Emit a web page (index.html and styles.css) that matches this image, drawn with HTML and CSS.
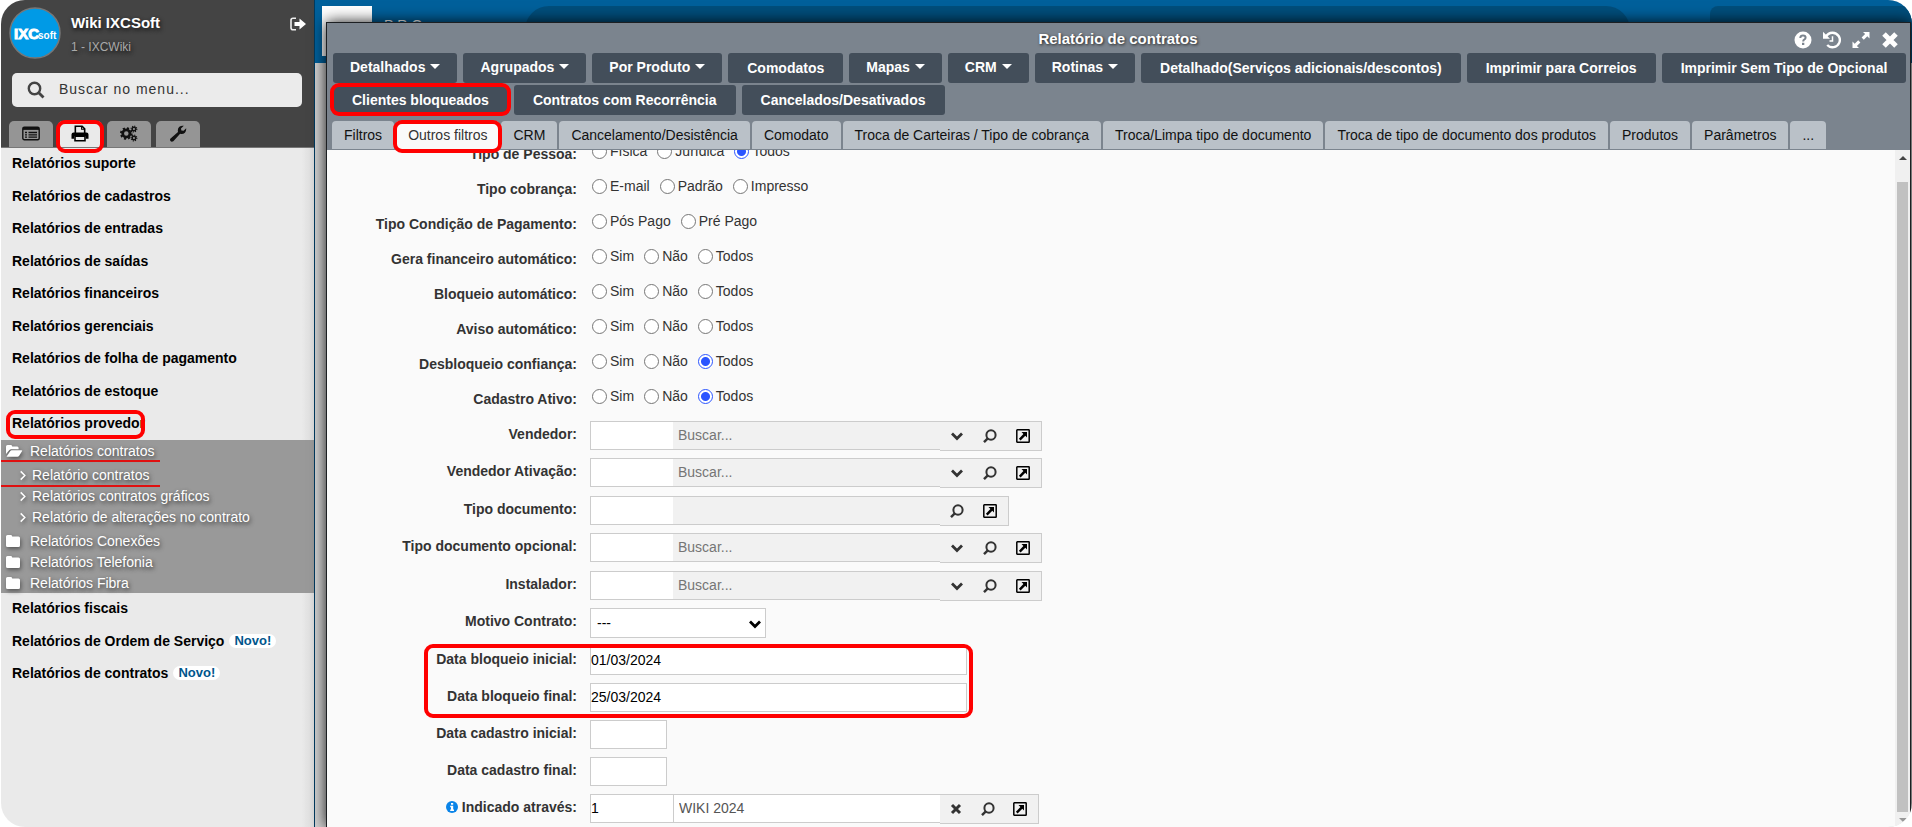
FILE: index.html
```
<!DOCTYPE html>
<html lang="pt-BR">
<head>
<meta charset="utf-8">
<title>Relatório de contratos</title>
<link rel="stylesheet" href="styles.css">
</head>
<body>
<svg class="defs" aria-hidden="true">
  <symbol id="i-chevron" viewBox="0 0 14 14"><path d="M2 4.500l5 5 5-5" fill="none" stroke="currentColor" stroke-width="2.800"/></symbol>
  <symbol id="i-lens" viewBox="0 0 14 14"><ellipse cx="8" cy="6" rx="4.600" ry="4.800" fill="none" stroke="currentColor" stroke-width="2"/><path d="M4.800 9.400L1 13.200" stroke="currentColor" stroke-width="2.400"/></symbol>
  <symbol id="i-open" viewBox="0 0 14 14"><rect x=".8" y=".8" width="12.400" height="12.400" rx=".5" fill="none" stroke="#000" stroke-width="1.500"/><path d="M5.500 3H11V8.500L9.300 6.800 4.600 11.500 2.900 9.800 7.400 5z" fill="#000"/></symbol>
  <symbol id="i-x" viewBox="0 0 14 14"><path d="M3 3l8 8M11 3l-8 8" stroke="currentColor" stroke-width="3"/></symbol>
  <symbol id="i-folder" viewBox="0 0 16 14"><path d="M1 2.500Q1 1 2.500 1H6q1.200 0 1.200 1.500h6.300Q15 2.500 15 4v7.500q0 1.500-1.500 1.500h-11Q1 13 1 11.500z" fill="currentColor"/></symbol>
  <symbol id="i-folder-open" viewBox="0 0 18 14"><path d="M1 10V2.500Q1 1 2.500 1H6q1.200 0 1.200 1.500h5Q13.600 2.500 13.600 4v1.200H6.300Q5 5.200 4.200 6.200z" fill="currentColor"/><path d="M1.500 12.800L5.300 7Q5.800 6.300 6.700 6.300H16.500q1.200 0 .500 1L14 12Q13.400 12.800 12.500 12.800z" fill="currentColor"/></symbol>
  <symbol id="i-angle" viewBox="0 0 8 12"><path d="M1.500 1.500L6 6l-4.500 4.500" fill="none" stroke="currentColor" stroke-width="1.600"/></symbol>
</svg>

<div class="app">
  <aside class="sidebar">
    <header class="side-head">
      <div class="user">
        <svg class="avatar" viewBox="0 0 52 52" role="img" aria-label="IXCsoft">
          <circle cx="26" cy="26" r="25" fill="#009ae6" stroke="#777" stroke-width="1.500"/>
          <text class="logo-big" x="5" y="32">IXC</text>
          <text class="logo-small" x="29" y="32">soft</text>
        </svg>
        <div class="who"><strong>Wiki IXCSoft</strong><span>1 - IXCWiki</span></div>
        <button class="bare logout" aria-label="Sair"><svg viewBox="0 0 16 14"><path d="M6 1.200H3Q1 1.200 1 3.200v7.600q0 2 2 2h3" fill="none" stroke="#eee" stroke-width="1.600"/><path d="M4.500 5h5V1.500L16 7 9.500 12.500V9h-5z" fill="#fff"/></svg></button>
      </div>
      <label class="search"><svg viewBox="0 0 18 18"><circle cx="7.500" cy="7.500" r="5.700" fill="none" stroke="#444" stroke-width="2.400"/><path d="M11.500 11.500L16.500 16.500" stroke="#444" stroke-width="2.800"/></svg><input type="text" aria-label="Buscar no menu" placeholder="Buscar no menu..."></label>
      <nav class="side-tabs">
        <button aria-label="Cadastros"><svg viewBox="0 0 18 16"><rect x=".8" y="1.800" width="16.400" height="12.400" rx="1.500" fill="none" stroke="#111" stroke-width="1.400"/><path d="M1 3.300h16M3 7h2M3 9.300h2M3 11.600h2M6.500 7H15M6.500 9.300H15M6.500 11.600H15" stroke="#111" stroke-width="1.300"/><path d="M1 3h16" stroke="#111" stroke-width="2.500"/></svg></button>
        <button class="on marked" aria-label="Relatórios"><svg viewBox="0 0 16 16"><path d="M3.600 8V1.200H10l2.400 2.400V8" fill="none" stroke="#000" stroke-width="1.500"/><path d="M9.500 1v3h3" fill="none" stroke="#000"/><path d="M0 13V9Q0 7 2 7H14q2 0 2 2v4h-2.500v-2.500h-11V13z" fill="#000"/><path d="M3.300 10.500h9.400v4.300H3.300z" fill="#eaeaea" stroke="#000" stroke-width="1.500"/></svg></button>
        <button aria-label="Configurações"><svg viewBox="0 0 20 18"><circle cx="7" cy="9" r="4" fill="none" stroke="#111" stroke-width="3"/><circle cx="7" cy="9" r="6" fill="none" stroke="#111" stroke-width="2" stroke-dasharray="2.400 2.310"/><circle cx="15.500" cy="4" r="2" fill="none" stroke="#111" stroke-width="1.600"/><circle cx="15.500" cy="4" r="3.200" fill="none" stroke="#111" stroke-width="1.200" stroke-dasharray="1.200 1.310"/><circle cx="15.500" cy="14" r="2" fill="none" stroke="#111" stroke-width="1.600"/><circle cx="15.500" cy="14" r="3.200" fill="none" stroke="#111" stroke-width="1.200" stroke-dasharray="1.200 1.310"/></svg></button>
        <button aria-label="Ferramentas"><svg viewBox="0 0 16 16"><path d="M1 12.700L8 6.500Q7.300 3.500 9.300 1.700 11 .3 13.500.7L10.800 3.200 11.200 5.200 13.300 5.500 15.700 3Q16 5.500 14.500 7.200 12.700 9 10 8.300L3.600 15.200Q2 16.200.900 15 0 13.800 1 12.700z" fill="#111"/></svg></button>
      </nav>
    </header>
    <ul class="menu">
      <li><a href="#">Relatórios suporte</a></li>
      <li><a href="#">Relatórios de cadastros</a></li>
      <li><a href="#">Relatórios de entradas</a></li>
      <li><a href="#">Relatórios de saídas</a></li>
      <li><a href="#">Relatórios financeiros</a></li>
      <li><a href="#">Relatórios gerenciais</a></li>
      <li><a href="#">Relatórios de folha de pagamento</a></li>
      <li><a href="#">Relatórios de estoque</a></li>
      <li class="marked-item"><a href="#">Relatórios provedor</a></li>
    </ul>
    <div class="submenu">
      <a href="#" class="underlined"><svg class="open"><use href="#i-folder-open"/></svg>Relatórios contratos</a>
      <div class="leafs">
        <a href="#" class="underlined"><svg><use href="#i-angle"/></svg>Relatório contratos</a>
        <a href="#"><svg><use href="#i-angle"/></svg>Relatórios contratos gráficos</a>
        <a href="#"><svg><use href="#i-angle"/></svg>Relatório de alterações no contrato</a>
      </div>
      <a href="#"><svg><use href="#i-folder"/></svg>Relatórios Conexões</a>
      <a href="#"><svg><use href="#i-folder"/></svg>Relatórios Telefonia</a>
      <a href="#"><svg><use href="#i-folder"/></svg>Relatórios Fibra</a>
    </div>
    <ul class="menu">
      <li><a href="#">Relatórios fiscais</a></li>
      <li><a href="#">Relatórios de Ordem de Serviço</a><span class="new">Novo!</span></li>
      <li><a href="#">Relatórios de contratos</a><span class="new">Novo!</span></li>
    </ul>
  </aside>

  <main class="stage">
    <div class="topbar">
      <div class="brand-box"></div>
      <span class="brand">PRO</span>
      <div class="top-pill"></div>
      <div class="top-box"></div>
    </div>

    <section class="window">
      <header class="win-head">
        <div class="title-row">
          <h1>Relatório de contratos</h1>
          <div class="win-tools">
            <button class="bare" aria-label="Ajuda"><svg viewBox="0 0 18 18"><circle cx="9" cy="9" r="8.500" fill="#fff"/><path d="M6.300 7Q6.500 4.600 9 4.600 11.600 4.600 11.600 6.800 11.600 8 10.200 8.700 9.200 9.200 9.200 10.500" fill="none" stroke="#7b848e" stroke-width="2"/><path d="M8 11.800h2.300v2.200H8z" fill="#7b848e"/></svg></button>
            <button class="bare" aria-label="Histórico"><svg viewBox="0 0 18 18"><path d="M2.800 6Q5 1.700 9.500 1.700A7.300 7.300 0 1 1 4.200 14" fill="none" stroke="#fff" stroke-width="2.400"/><path d="M0 .8V7.800H7z" fill="#fff"/><path d="M9.500 5.200V10H6.500" fill="none" stroke="#fff" stroke-width="1.500"/></svg></button>
            <button class="bare" aria-label="Maximizar"><svg viewBox="0 0 18 18"><path d="M11 1h6.500v6.500L15.300 5.300 11.800 8.800 9.600 6.600 13.100 3.100zM7 17H.500v-6.500L2.700 12.700 6.200 9.200 8.400 11.400 4.900 14.900z" fill="#fff"/></svg></button>
            <button class="bare" aria-label="Fechar"><svg viewBox="0 0 18 18"><path d="M3 3l12 12M15 3L3 15" stroke="#fff" stroke-width="5"/></svg></button>
          </div>
        </div>
        <div class="actions">
          <button class="drop">Detalhados</button>
          <button class="drop">Agrupados</button>
          <button class="drop">Por Produto</button>
          <button>Comodatos</button>
          <button class="drop">Mapas</button>
          <button class="drop">CRM</button>
          <button class="drop">Rotinas</button>
          <button>Detalhado(Serviços adicionais/descontos)</button>
          <button>Imprimir para Correios</button>
          <button>Imprimir Sem Tipo de Opcional</button>
          <button class="marked">Clientes bloqueados</button>
          <button>Contratos com Recorrência</button>
          <button>Cancelados/Desativados</button>
        </div>
        <nav class="tabs">
          <button>Filtros</button>
          <button class="on marked">Outros filtros</button>
          <button>CRM</button>
          <button>Cancelamento/Desistência</button>
          <button>Comodato</button>
          <button>Troca de Carteiras / Tipo de cobrança</button>
          <button>Troca/Limpa tipo de documento</button>
          <button>Troca de tipo de documento dos produtos</button>
          <button>Produtos</button>
          <button>Parâmetros</button>
          <button>...</button>
        </nav>
      </header>

      <div class="win-body">
        <form class="form">
          <div class="radios">
            <fieldset><legend>Tipo de Pessoa:</legend><label><input type="radio" name="pessoa">Física</label><label><input type="radio" name="pessoa">Jurídica</label><label><input type="radio" name="pessoa" checked>Todos</label></fieldset>
            <fieldset><legend>Tipo cobrança:</legend><label><input type="radio" name="cob">E-mail</label><label><input type="radio" name="cob">Padrão</label><label><input type="radio" name="cob">Impresso</label></fieldset>
            <fieldset><legend>Tipo Condição de Pagamento:</legend><label><input type="radio" name="pag">Pós Pago</label><label><input type="radio" name="pag">Pré Pago</label></fieldset>
            <fieldset><legend>Gera financeiro automático:</legend><label><input type="radio" name="fin">Sim</label><label><input type="radio" name="fin">Não</label><label><input type="radio" name="fin">Todos</label></fieldset>
            <fieldset><legend>Bloqueio automático:</legend><label><input type="radio" name="blo">Sim</label><label><input type="radio" name="blo">Não</label><label><input type="radio" name="blo">Todos</label></fieldset>
            <fieldset><legend>Aviso automático:</legend><label><input type="radio" name="avi">Sim</label><label><input type="radio" name="avi">Não</label><label><input type="radio" name="avi">Todos</label></fieldset>
            <fieldset><legend>Desbloqueio confiança:</legend><label><input type="radio" name="des">Sim</label><label><input type="radio" name="des">Não</label><label><input type="radio" name="des" checked>Todos</label></fieldset>
            <fieldset><legend>Cadastro Ativo:</legend><label><input type="radio" name="cad">Sim</label><label><input type="radio" name="cad">Não</label><label><input type="radio" name="cad" checked>Todos</label></fieldset>
          </div>
          <div class="fields">
            <div class="row"><label for="f1">Vendedor:</label><div class="lookup"><input id="f1" class="code" type="text"><input class="find" type="text" placeholder="Buscar..." aria-label="Buscar vendedor"><span class="tools"><button type="button" aria-label="Abrir lista"><svg><use href="#i-chevron"/></svg></button><button type="button" aria-label="Pesquisar"><svg><use href="#i-lens"/></svg></button><button type="button" aria-label="Abrir cadastro"><svg><use href="#i-open"/></svg></button></span></div></div>
            <div class="row"><label for="f2">Vendedor Ativação:</label><div class="lookup"><input id="f2" class="code" type="text"><input class="find" type="text" placeholder="Buscar..." aria-label="Buscar vendedor ativação"><span class="tools"><button type="button" aria-label="Abrir lista"><svg><use href="#i-chevron"/></svg></button><button type="button" aria-label="Pesquisar"><svg><use href="#i-lens"/></svg></button><button type="button" aria-label="Abrir cadastro"><svg><use href="#i-open"/></svg></button></span></div></div>
            <div class="row"><label for="f3">Tipo documento:</label><div class="lookup"><input id="f3" class="code" type="text"><input class="find" type="text" aria-label="Buscar tipo documento"><span class="tools"><button type="button" aria-label="Pesquisar"><svg><use href="#i-lens"/></svg></button><button type="button" aria-label="Abrir cadastro"><svg><use href="#i-open"/></svg></button></span></div></div>
            <div class="row"><label for="f4">Tipo documento opcional:</label><div class="lookup"><input id="f4" class="code" type="text"><input class="find" type="text" placeholder="Buscar..." aria-label="Buscar tipo documento opcional"><span class="tools"><button type="button" aria-label="Abrir lista"><svg><use href="#i-chevron"/></svg></button><button type="button" aria-label="Pesquisar"><svg><use href="#i-lens"/></svg></button><button type="button" aria-label="Abrir cadastro"><svg><use href="#i-open"/></svg></button></span></div></div>
            <div class="row"><label for="f5">Instalador:</label><div class="lookup"><input id="f5" class="code" type="text"><input class="find" type="text" placeholder="Buscar..." aria-label="Buscar instalador"><span class="tools"><button type="button" aria-label="Abrir lista"><svg><use href="#i-chevron"/></svg></button><button type="button" aria-label="Pesquisar"><svg><use href="#i-lens"/></svg></button><button type="button" aria-label="Abrir cadastro"><svg><use href="#i-open"/></svg></button></span></div></div>
            <div class="row"><label for="f6">Motivo Contrato:</label><span class="select"><select id="f6"><option>---</option></select><svg><use href="#i-chevron"/></svg></span></div>
            <div class="row outlined"><label for="f7">Data bloqueio inicial:</label><input id="f7" class="date wide" type="text" value="01/03/2024"></div>
            <div class="row"><label for="f8">Data bloqueio final:</label><input id="f8" class="date wide" type="text" value="25/03/2024"></div>
            <div class="row"><label for="f9">Data cadastro inicial:</label><input id="f9" class="date" type="text"></div>
            <div class="row"><label for="f10">Data cadastro final:</label><input id="f10" class="date" type="text"></div>
            <div class="row"><label for="f11"><svg class="info" viewBox="0 0 12 12"><circle cx="6" cy="6" r="6" fill="#0a84e8"/><path d="M5 2h2.200v1.800H5zM4.200 4.800h3V8.500H8V10H4.200V8.500H5V6.200h-.8z" fill="#fff"/></svg>Indicado através:</label><div class="lookup filled"><input id="f11" class="code" type="text" value="1"><input class="find" type="text" value="WIKI 2024" aria-label="Indicado através, nome"><span class="tools"><button type="button" aria-label="Limpar"><svg><use href="#i-x"/></svg></button><button type="button" aria-label="Pesquisar"><svg><use href="#i-lens"/></svg></button><button type="button" aria-label="Abrir cadastro"><svg><use href="#i-open"/></svg></button></span></div></div>
          </div>
        </form>
        <div class="scroll" aria-hidden="true"><i class="up"></i><i class="thumb"></i><i class="down"></i></div>
      </div>
    </section>
  </main>
</div>
</body>
</html>
```
FILE: styles.css
```
*, *::before, *::after { box-sizing: border-box; }
html, body { height: 100%; }
body {
  margin: 0;
  padding: 0 0 0 1px;
  background: #fff;
  font: 14px/16px "Liberation Sans", Arial, sans-serif;
  color: #333;
  overflow: hidden;
}
button, input, select { font: inherit; color: inherit; margin: 0; }
button { border: 0; cursor: pointer; }
a { color: inherit; text-decoration: none; }
svg { display: block; flex: none; }
.defs { position: absolute; width: 0; height: 0; }
.bare { background: none; padding: 0; }

.app {
  display: flex;
  height: 100%;
  border-radius: 24px;
  overflow: hidden;
}

/* Sidebar */
.sidebar {
  flex: none;
  width: 314px;
  background: linear-gradient(90deg, #eaeaea 96%, #dcdcdc);
  border-right: 1px solid #003a5f;
}
.side-head { background: #444; border-bottom: 1px solid #777; height: 148px; }
.user { display: flex; padding: 7px 8px 0; height: 73px; }
.avatar { width: 52px; height: 52px; }
.logo-big, .logo-small { font-weight: bold; fill: #fff; stroke: #fff; }
.logo-big { font-size: 15px; stroke-width: 1px; }
.logo-small { font-size: 10px; stroke-width: 0; }
.who { flex: 1; margin-left: 10px; padding-top: 8px; text-shadow: 1px 2px 4px #111; }
.who strong { display: block; font-size: 15px; line-height: 16px; color: #fff; }
.who span { display: block; margin-top: 8px; font-size: 12px; color: #aaa; }
.logout { align-self: flex-start; margin-top: 10px; }
.logout svg { width: 16px; height: 14px; }
.search {
  display: flex;
  align-items: center;
  height: 34px;
  margin: 0 12px 0 11px;
  padding-left: 15px;
  border-radius: 5px;
  background: #ebebeb;
}
.search svg { width: 18px; height: 18px; }
.search input {
  flex: 1;
  min-width: 0;
  height: 32px;
  margin-left: 14px;
  padding: 0 0 2px;
  border: 0;
  background: none;
  letter-spacing: 1px;
}
.search input::placeholder { color: #333; opacity: 1; }
.side-tabs { display: flex; gap: 5px; padding: 14px 8px 0; }
.side-tabs button {
  display: flex;
  align-items: center;
  justify-content: center;
  width: 44px;
  height: 26px;
  padding: 0 0 2px;
  border-radius: 5px 5px 0 0;
  background: #959595;
}
.side-tabs svg { width: 18px; height: 17px; }
.side-tabs .on { background: #eaeaea; }

/* Red markers drawn over the interface */
.marked, .marked-item, .outlined, .underlined { position: relative; }
.marked::after, .marked-item::after, .outlined::after {
  content: "";
  position: absolute;
  z-index: 2;
  border: 4px solid #f00;
  border-radius: 9px;
  pointer-events: none;
}
.side-tabs .marked::after { inset: -1px -2px -6px -2px; }
.marked-item::after { left: 5px; top: 2px; width: 139px; height: 29px; }
.actions .marked::after { inset: -2px -3px -1px -3px; }
.tabs .marked::after { inset: -1px -3px -4px -3px; }
.outlined::after { left: 97px; top: -2px; width: 549px; height: 74px; }
.underlined::after {
  content: "";
  position: absolute;
  left: 0;
  bottom: -1px;
  width: 159px;
  height: 2px;
  background: #e01010;
}
.leafs .underlined::after { bottom: -2px; }

.menu { margin: 0; padding: 0; list-style: none; color: #000; font-weight: bold; }
.menu li { display: flex; align-items: center; height: 32px; padding: 0 11px 2px; }
.menu li:nth-child(even) { height: 33px; }
.new {
  margin-left: 5px;
  padding: 0 5px;
  border-radius: 7px;
  background: #fff;
  color: #00568c;
  font-size: 13px;
  line-height: 14px;
}
.submenu { background: #999; color: #fff; line-height: 20px; }
.submenu a { display: flex; align-items: center; height: 21px; padding: 1px 0 0 4px; text-shadow: 1px 2px 4px #333; }
.submenu svg { width: 16px; height: 14px; margin-right: 9px; filter: drop-shadow(1px 2px 2px #555); }
.submenu svg.open { width: 18px; margin-right: 7px; }
.leafs { padding: 3px 0; }
.leafs a { padding-left: 18px; }
.leafs svg { width: 8px; height: 11px; margin-right: 5px; }

/* Workspace */
.stage {
  position: relative;
  flex: 1;
  min-width: 0;
  display: flex;
  flex-direction: column;
  padding: 22px 1px 0 11px;
  background: #d0d0d0;
}
.topbar {
  position: absolute;
  inset: 0 0 auto 0;
  height: 63px;
  display: flex;
  padding: 6px 0 0 7px;
  background: #00609b;
}
.brand-box { width: 50px; height: 50px; background: #fff; }
.brand { width: 50px; margin: 11px 0 0 12px; color: #fff; letter-spacing: 4px; }
.top-pill { width: 1105px; margin-left: 91px; border-radius: 24px 24px 0 0; background: #004e7c; }
.top-box { flex: 1; margin-left: 80px; border-radius: 8px 0 0 0; background: #004e7c; }

.window {
  position: relative;
  flex: 1;
  min-height: 0;
  display: flex;
  flex-direction: column;
  border: 1px solid #1c1f22;
  border-bottom: 0;
  box-shadow: 0 0 14px rgba(0, 0, 0, .9);
}
.win-head { position: relative; z-index: 1; background: #7b848e; border-bottom: 1px solid #7b848e; }
.title-row { display: grid; grid-template-columns: 1fr auto 1fr; align-items: center; height: 30px; padding-right: 11px; }
.title-row h1 { grid-column: 2; margin: 2px 0 0 10px; font-size: 15px; line-height: 20px; color: #fff; text-shadow: 1px 1px 3px #222; }
.win-tools { display: flex; justify-content: flex-end; gap: 11px; padding-top: 4px; }
.win-tools svg { width: 18px; height: 18px; }
.actions { display: flex; flex-wrap: wrap; gap: 2px 6px; padding: 0 0 0 6px; }
.actions button {
  height: 30px;
  padding: 0 19px;
  border-radius: 3px;
  background: #434e5a;
  color: #fff;
  font-weight: bold;
  white-space: nowrap;
}
.actions .drop { padding: 0 17px 2px; }
.drop::after {
  content: "";
  display: inline-block;
  margin-left: 5px;
  vertical-align: 3px;
  border: 5px solid transparent;
  border-top-color: #fff;
  border-bottom: 0;
}
.tabs { display: flex; gap: 2px; padding: 6px 0 0 5px; }
.tabs button {
  height: 28px;
  padding: 0 12px;
  border-radius: 4px 4px 0 0;
  background: #bac1c8;
  color: #111;
  white-space: nowrap;
}
.tabs .on { background: #fafafa; color: #333; }

.win-body { flex: 1; min-height: 0; display: flex; background: #fafafa; overflow: hidden; }
.form { flex: 1; min-width: 0; margin-top: -16px; }
fieldset {
  position: relative;
  display: flex;
  gap: 10px;
  height: 35px;
  margin: 0;
  padding: 9px 0 0 265px;
  border: 0;
}
legend { position: absolute; left: 0; top: 12px; width: 250px; padding: 0; text-align: right; font-weight: bold; }
fieldset label { display: flex; gap: 3px; height: 16px; align-items: center; }
input[type="radio"] {
  appearance: none;
  width: 15px;
  height: 15px;
  border: 1px solid #767676;
  border-radius: 50%;
  background: #fff;
}
input[type="radio"]:checked { border-color: #2b55ff; background: radial-gradient(#2b55ff 4px, #fff 5px); }
.fields { padding-top: 7px; }
.row { display: grid; grid-template-columns: 250px auto; justify-content: start; align-items: start; gap: 13px; height: 37px; }
.row:nth-child(2), .row:nth-child(4), .row:nth-child(6) { height: 38px; }
.row > label { display: flex; justify-content: flex-end; padding-top: 5px; font-weight: bold; }
.row input { height: 29px; padding: 0 0 2px; border: 1px solid #ccc; border-radius: 0; background: #fff; color: #000; outline: 0; }
.row .date { width: 77px; }
.row .wide { width: 377px; }
.lookup { display: flex; align-items: flex-start; }
.row .code { width: 83px; border-right: 0; }
.row .find { width: 267px; padding-left: 5px; border-width: 1px 0; background: #f1f1f1; }
.find::placeholder { color: #757575; opacity: 1; }
.tools { display: flex; height: 30px; padding-right: 2px; border: 1px solid #ccc; border-left: 0; background: #f1f1f1; }
.tools button { display: flex; align-items: center; justify-content: center; width: 33px; padding: 0; background: none; color: #333; }
.tools svg { width: 14px; height: 14px; }
.row .filled .find { border-left-width: 1px; background: #fff; color: #555; }
.filled .tools button { width: 32px; }
.select { position: relative; }
.select select { display: block; appearance: none; width: 176px; height: 30px; padding: 0 6px; border: 1px solid #ccc; border-radius: 0; background: #fff; color: #000; }
.select svg { position: absolute; right: 4px; top: 9px; width: 14px; height: 14px; color: #000; pointer-events: none; }
.info { width: 12px; height: 12px; margin: 2px 4px 0 0; }

.scroll { flex: none; width: 15px; display: flex; flex-direction: column; align-items: center; gap: 22px; padding: 6px 0 5px; background: #f0f0f0; }
.scroll i { flex: none; border: 4px solid transparent; }
.scroll .up { border-top: 0; border-bottom-color: #444; }
.scroll .thumb { flex: 1; width: 11px; border: 0; background: #c1c1c1; margin-bottom: -16px; }
.scroll .down { border-bottom: 0; border-top-color: #999; }
```
